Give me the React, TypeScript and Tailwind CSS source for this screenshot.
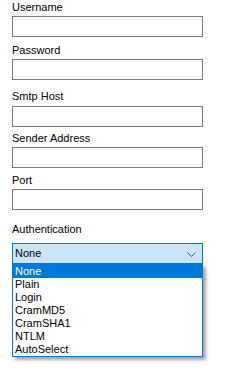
import React from "react";

const Field = ({ label, mt, gap }: { label: string; mt: string; gap: string }) => (
  <div className={mt}>
    <div className="h-[13px] leading-[13px]">{label}</div>
    <div className={`${gap} h-[21px] w-[191px] border border-[#7a7a7a] bg-white`} />
  </div>
);

const items = ["None", "Plain", "Login", "CramMD5", "CramSHA1", "NTLM", "AutoSelect"];

export default function App() {
  return (
    <div
      className="w-[246px] h-[381px] bg-white text-black text-[11px] pl-[12px]"
      style={{ fontFamily: '"Liberation Sans", Arial, sans-serif' }}
    >
      <div className="pt-[1px]">
        <div className="h-[13px] leading-[13px]">Username</div>
        <div className="mt-[2px] h-[21px] w-[191px] border border-[#7a7a7a] bg-white" />
      </div>
      <div className="mt-[7px]">
        <div className="h-[13px] leading-[13px]">Password</div>
        <div className="mt-[2px] h-[21px] w-[191px] border border-[#7a7a7a] bg-white" />
      </div>
      <div className="mt-[10px]">
        <div className="h-[13px] leading-[13px]">Smtp Host</div>
        <div className="mt-[3px] h-[21px] w-[191px] border border-[#7a7a7a] bg-white" />
      </div>
      <div className="mt-[5px]">
        <div className="h-[13px] leading-[13px]">Sender Address</div>
        <div className="mt-[2px] h-[21px] w-[191px] border border-[#7a7a7a] bg-white" />
      </div>
      <div className="mt-[6px]">
        <div className="h-[13px] leading-[13px]">Port</div>
        <div className="mt-[2px] h-[21px] w-[191px] border border-[#7a7a7a] bg-white" />
      </div>
      <div className="mt-[13px]">
        <div className="h-[13px] leading-[13px]">Authentication</div>
        <div className="relative mt-[7px] w-[191px]">
          <div className="h-[21px] w-[191px] border border-[#0078d7] bg-[#cce4f7] flex items-center pl-[2px] pr-[6px]">
            <span className="flex-1 leading-[13px]">None</span>
            <svg width="9" height="5" viewBox="0 0 9 5" className="mt-[1px]">
              <path d="M0.5 0.5 L4.5 4.5 L8.5 0.5" fill="none" stroke="#505050" strokeWidth="1" />
            </svg>
          </div>
          <div className="absolute left-0 top-[21px] w-[191px] border border-[#0078d7] bg-white shadow-[3px_3px_3px_rgba(0,0,0,0.35)]">
            {items.map((it, i) => (
              <div
                key={it}
                className={
                  i === 0
                    ? "h-[13px] leading-[13px] pl-[2px] bg-[#0078d7] text-white"
                    : "h-[13px] leading-[13px] pl-[2px]"
                }
              >
                {it}
              </div>
            ))}
          </div>
        </div>
      </div>
    </div>
  );
}
